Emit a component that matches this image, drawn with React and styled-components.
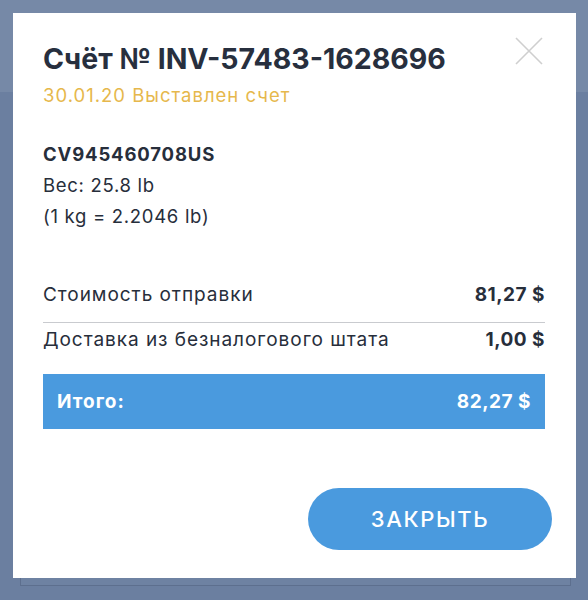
import React from 'react';
import styled, {createGlobalStyle} from 'styled-components';

const GlobalStyle = createGlobalStyle`
  html, body {
    margin: 0;
    padding: 0;
  }
  body {
    font-family: Inter, "Open Sans", sans-serif;
    background: #6b7fa0;
  }
`;

const Page = styled.div`
  position: relative;
  width: 588px;
  height: 600px;
  overflow: hidden;
  background: linear-gradient(#7689a7 0, #7689a7 92px, #6b7fa0 92px);
`;

const BehindCard = styled.div`
  position: absolute;
  left: 20px;
  right: 17px;
  top: 100px;
  height: 485px;
  background: #6e82a2;
  border: 1px solid #5d6f8e;
  border-top: none;
`;

const Overlay = styled.div`
  position: absolute;
  inset: 0;
  padding: 13px 12px 0 13px;
`;

const Modal = styled.div`
  position: relative;
  width: 563px;
  height: 565px;
  box-sizing: border-box;
  background: #fff;
  padding: 26px 31px 28px 30px;
  display: flex;
  flex-direction: column;
  color: #272e3b;
`;

const Close = styled.button`
  position: absolute;
  top: 23px;
  right: 32px;
  width: 30px;
  height: 30px;
  padding: 0;
  border: none;
  background: none;
  cursor: pointer;
`;

const Title = styled.h2`
  margin: 0;
  font-size: 28.5px;
  font-weight: 700;
  color: #272f3e;
  line-height: 40px;
`;

const Status = styled.div`
  margin-top: 2px;
  font-size: 18.5px;
  letter-spacing: 1px;
  color: #e6b84c;
  line-height: 28px;
`;

const Parcel = styled.div`
  margin-top: 30px;
  display: flex;
  flex-direction: column;
  font-size: 18.5px;
  letter-spacing: 0.7px;
  line-height: 31px;
`;

const Track = styled.div`
  font-weight: 700;
  letter-spacing: 0.85px;
`;

const Rows = styled.div`
  margin-top: 50px;
  display: flex;
  flex-direction: column;
`;

const Row = styled.div`
  display: flex;
  justify-content: space-between;
  align-items: center;
  line-height: 26px;
  font-size: 19px;
  letter-spacing: 0.95px;
  padding: ${p => p.$divider ? '0 0 14px' : '4px 0 0'};
  border-bottom: ${p => p.$divider ? '1px solid #c9cbcf' : 'none'};
`;

const Amount = styled.span`
  font-weight: 700;
  letter-spacing: 0.5px;
`;

const Total = styled.div`
  margin-top: 21px;
  height: 55px;
  background: #4a9ade;
  color: #fff;
  display: flex;
  justify-content: space-between;
  align-items: center;
  padding: 0 14px;
  font-size: 19px;
  font-weight: 700;
  letter-spacing: 0.5px;

  span:first-child {
    letter-spacing: 1px;
  }
`;

const Footer = styled.div`
  margin-top: auto;
  display: flex;
  justify-content: flex-end;
  margin-right: -7px;
`;

const CloseButton = styled.button`
  width: 244px;
  height: 62px;
  border: none;
  border-radius: 31px;
  background: #4a9ade;
  color: #fff;
  font-family: inherit;
  font-size: 22px;
  font-weight: 500;
  letter-spacing: 1.6px;
  cursor: pointer;
`;

export default function App() {
    return (
        <Page>
            <GlobalStyle/>
            <BehindCard/>
            <Overlay>
                <Modal>
                    <Close aria-label="close">
                        <svg width="30" height="30" viewBox="0 0 30 30">
                            <path d="M2 2 L28 28 M28 2 L2 28" stroke="#cfcfcf" strokeWidth="1.6" fill="none"/>
                        </svg>
                    </Close>
                    <Title>Счёт № INV-57483-1628696</Title>
                    <Status>30.01.20 Выставлен счет</Status>
                    <Parcel>
                        <Track>CV945460708US</Track>
                        <div>Вес: 25.8 lb</div>
                        <div>(1 kg = 2.2046 lb)</div>
                    </Parcel>
                    <Rows>
                        <Row $divider>
                            <span>Стоимость отправки</span>
                            <Amount>81,27 $</Amount>
                        </Row>
                        <Row>
                            <span>Доставка из безналогового штата</span>
                            <Amount>1,00 $</Amount>
                        </Row>
                    </Rows>
                    <Total>
                        <span>Итого:</span>
                        <span>82,27 $</span>
                    </Total>
                    <Footer>
                        <CloseButton>ЗАКРЫТЬ</CloseButton>
                    </Footer>
                </Modal>
            </Overlay>
        </Page>
    );
}
